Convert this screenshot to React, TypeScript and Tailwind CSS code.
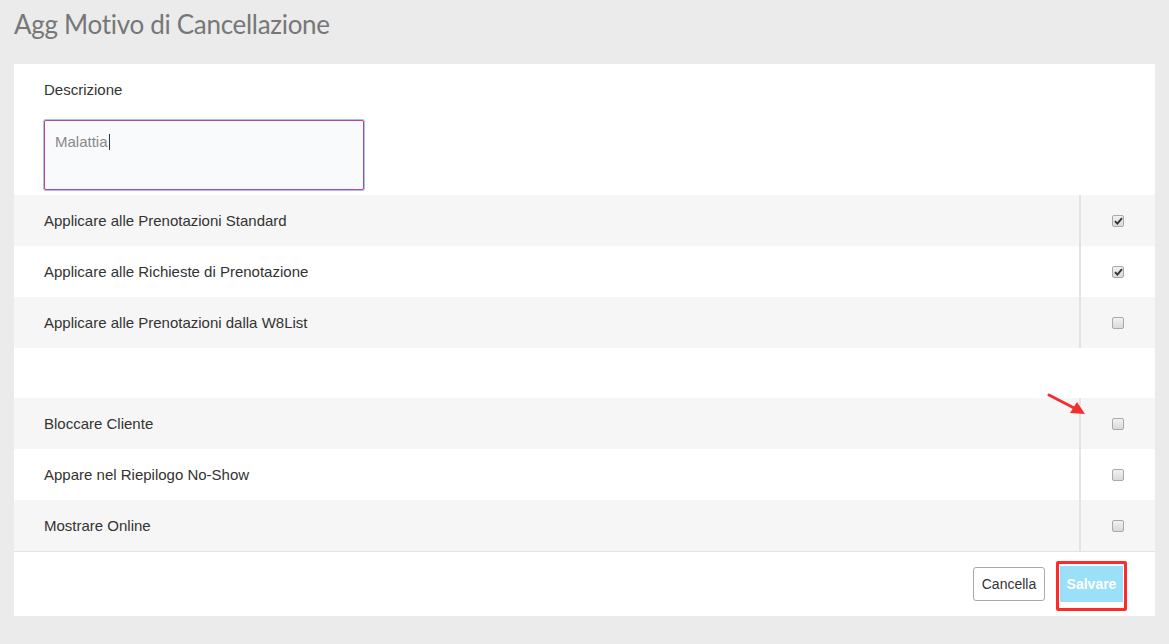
import React from 'react'

type Row = { label: string; checked: boolean; shade: boolean }

const GROUP_A: Row[] = [
  { label: 'Applicare alle Prenotazioni Standard', checked: true, shade: true },
  { label: 'Applicare alle Richieste di Prenotazione', checked: true, shade: false },
  { label: 'Applicare alle Prenotazioni dalla W8List', checked: false, shade: true },
]

const GROUP_B: Row[] = [
  { label: 'Bloccare Cliente', checked: false, shade: true },
  { label: 'Appare nel Riepilogo No-Show', checked: false, shade: false },
  { label: 'Mostrare Online', checked: false, shade: true },
]

function Check({ checked }: { checked: boolean }) {
  return (
    <span className="flex h-[12px] w-[12px] items-center justify-center rounded-[2px] border border-[#a9a9a9] bg-gradient-to-b from-[#f2f2f2] to-[#d9d9d9]">
      {checked && (
        <svg width="9" height="8" viewBox="0 0 9 8">
          <path d="M1 4.2 L3.4 6.6 L8 1.2" fill="none" stroke="#333" strokeWidth="1.9" />
        </svg>
      )}
    </span>
  )
}

function OptionRow({ row }: { row: Row }) {
  return (
    <div className={`flex h-[51px] items-center ${row.shade ? 'bg-[#f6f6f6]' : 'bg-white'}`}>
      <div className="flex-1 pl-[30px] pt-[1px] text-[15px] text-[#333]">{row.label}</div>
      <div className="h-full w-[2px] bg-[#e3e3e3]" />
      <div className="flex w-[74px] items-center justify-center">
        <Check checked={row.checked} />
      </div>
    </div>
  )
}

export default function App() {
  return (
    <div className="relative min-h-[644px] bg-[#ebebeb] pb-[28px]" style={{ fontFamily: '"Liberation Sans", Arial, sans-serif' }}>
      <h1 className="px-[14px] pt-[8px] text-[26px] leading-[32px] tracking-[-0.3px] text-[#777]" style={{ fontFamily: 'Lato, "Open Sans", sans-serif' }}>
        Agg Motivo di Cancellazione
      </h1>

      <div className="mx-[14px] mt-[24px] bg-white">
        <div className="px-[30px] pb-[5px] pt-[17px]">
          <div className="text-[15px] leading-[18px] text-[#333]">Descrizione</div>
          <div className="mt-[21px] h-[70px] w-[320px] rounded-[2px] border border-[#b24c92] bg-[#f9fafc] px-[10px] pt-[10px] text-[15px] text-[#888] shadow-[0_0_0_1px_#a7bff2]">
            Malattia<span className="ml-[1px] inline-block h-[16px] w-[1px] translate-y-[3px] bg-[#333]" />
          </div>
        </div>

        {GROUP_A.map((r) => (
          <OptionRow key={r.label} row={r} />
        ))}
        <div className="h-[50px] bg-white" />
        {GROUP_B.map((r) => (
          <OptionRow key={r.label} row={r} />
        ))}

        <div className="flex h-[65px] items-start justify-end gap-[11px] border-t border-[#e3e3e3] pr-[28px] pt-[9px]">
          <button className="mt-[6px] h-[34px] w-[72px] rounded-[3px] border border-[#aaa] bg-white text-[14px] text-[#333]">
            Cancella
          </button>
          <div className="rounded-[2px] border-[3px] border-[#ff2b2b] px-[1px] pb-[6px] pt-[2px]">
            <button className="h-[36px] w-[63px] bg-[#9ae0f8] text-[14px] font-bold text-white">Salvare</button>
          </div>
        </div>
      </div>

      <svg className="absolute left-[1046px] top-[392px]" width="42" height="26" viewBox="0 0 42 26">
        <line x1="3" y1="3" x2="30" y2="17" stroke="#f03030" strokeWidth="3" strokeLinecap="round" />
        <polygon points="39,22 24,21 31,10" fill="#f03030" />
      </svg>
    </div>
  )
}
